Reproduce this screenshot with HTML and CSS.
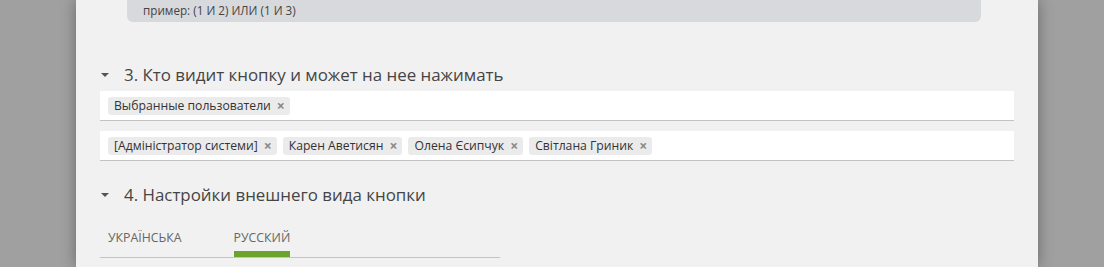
FILE: index.html
```html
<!DOCTYPE html>
<html lang="ru">
<head>
    <meta charset="UTF-8">
    <title>Настройки кнопки</title>
    <link rel="stylesheet" href="styles.css">
</head>
<body>
    <div class="panel">
        <div class="hint-box">пример: (1 И 2) ИЛИ (1 И 3)</div>

        <div class="section">
            <h3 class="section-title"><span class="caret"></span>3. Кто видит кнопку и может на нее нажимать</h3>
            <div class="tag-input">
                <span class="tag">Выбранные пользователи<span class="tag-remove">×</span></span>
            </div>
            <div class="tag-input second">
                <span class="tag">[Адміністратор системи]<span class="tag-remove">×</span></span>
                <span class="tag">Карен Аветисян<span class="tag-remove">×</span></span>
                <span class="tag">Олена Єсипчук<span class="tag-remove">×</span></span>
                <span class="tag">Світлана Гриник<span class="tag-remove">×</span></span>
            </div>

            <h3 class="section-title title-4"><span class="caret"></span>4. Настройки внешнего вида кнопки</h3>
            <div class="tabs">
                <span class="tab">Українська</span>
                <span class="tab active">Русский</span>
            </div>
        </div>
    </div>
</body>
</html>
```
FILE: styles.css
```css
body {
    margin: 0;
    padding: 0;
    background-color: #a0a0a0;
    font-family: 'Open Sans', 'Noto Sans', sans-serif;
    color: #333;
    overflow: hidden;
}
.panel {
    margin-left: 76px;
    width: 962px;
    min-height: 267px;
    background-color: #f1f1f1;
    box-shadow: 0 0 14px rgba(0, 0, 0, 0.35);
}
.hint-box {
    margin: 0 57px 0 51px;
    height: 22px;
    padding: 0 16px;
    line-height: 21px;
    font-size: 11.7px;
    color: #444;
    background-color: #d8d9dc;
    border-radius: 0 0 6px 6px;
}
.section {
    padding: 0 24px;
}
.section-title {
    display: flex;
    align-items: center;
    margin: 40px 0 5px;
    height: 24px;
    font-size: 16.9px;
    font-weight: normal;
    color: #454545;
}
.title-4 {
    margin-top: 21px;
}
.caret {
    width: 0;
    height: 0;
    margin: 1px 15px 0 1px;
    border-left: 4px solid transparent;
    border-right: 4px solid transparent;
    border-top: 4px solid #555;
}
.tag-input {
    display: flex;
    gap: 6px;
    height: 29px;
    padding: 0 8px;
    align-items: center;
    background-color: #fff;
    border-bottom: 1px solid #c2c2c2;
}
.second {
    margin-top: 10px;
}
.tag {
    display: inline-flex;
    align-items: center;
    height: 18px;
    padding: 0 5px 0 6px;
    font-size: 12.2px;
    color: #333;
    background-color: #ebebeb;
    border-radius: 3px;
}
.tag-remove {
    margin-left: 6px;
    font-size: 14px;
    font-weight: bold;
    color: #8a8a8a;
}
.tabs {
    display: flex;
    gap: 52px;
    width: 392px;
    margin-top: 23px;
    padding-left: 8px;
    border-bottom: 1px solid #c4c4c4;
}
.tab {
    padding-bottom: 4px;
    line-height: 18px;
    font-size: 12.3px;
    text-transform: uppercase;
    color: #666;
    border-bottom: 6px solid transparent;
}
.tab.active {
    border-bottom-color: #6ba42c;
}
```
